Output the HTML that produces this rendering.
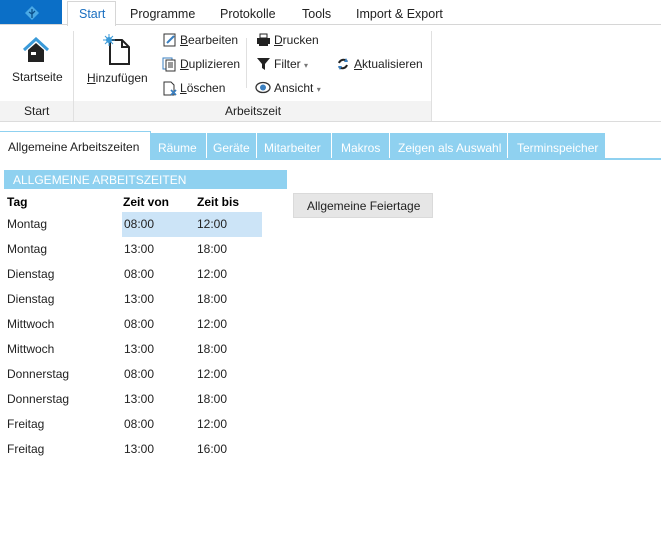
<!DOCTYPE html>
<html><head><meta charset="utf-8"><style>
*{margin:0;padding:0;box-sizing:border-box}
body{width:661px;height:558px;background:#fff;font-family:"Liberation Sans",sans-serif;font-size:12px;color:#222;position:relative;overflow:hidden}
.a{position:absolute;white-space:nowrap}
.u{text-decoration:underline}
</style></head><body>
<div class="a" style="left:0;top:0;width:62px;height:25px;background:#0b6fc7"></div>
<svg class="a" style="left:24px;top:5px" width="16" height="16" viewBox="0 0 16 16"><path d="M8 1L15 8L8 15L1 8Z" fill="#4aa9e6"/><path d="M8 4V13M5 7L8 9L11 6" stroke="#0b4f8a" stroke-width="1.3" fill="none"/></svg>
<div class="a" style="left:0;top:24px;width:661px;height:1px;background:#d6d6d6"></div>
<div class="a" style="left:67px;top:1px;width:49px;height:25px;background:#fff;border:1px solid #d6d6d6;border-bottom:none"></div>
<div class="a" style="left:79px;top:7px;color:#1a6fc0;font-size:12.5px">Start</div>
<div class="a" style="left:130px;top:7px;font-size:12.5px">Programme</div>
<div class="a" style="left:220px;top:7px;font-size:12.5px">Protokolle</div>
<div class="a" style="left:302px;top:7px;font-size:12.5px">Tools</div>
<div class="a" style="left:356px;top:7px;font-size:12.5px">Import &amp; Export</div>
<div class="a" style="left:0;top:101px;width:432px;height:20px;background:#f3f3f3"></div>
<div class="a" style="left:0;top:121px;width:661px;height:1px;background:#dcdcdc"></div>
<div class="a" style="left:73px;top:31px;width:1px;height:90px;background:#e0e0e0"></div>
<div class="a" style="left:431px;top:31px;width:1px;height:90px;background:#e0e0e0"></div>
<div class="a" style="left:246px;top:38px;width:1px;height:50px;background:#e0e0e0"></div>
<div class="a" style="left:24px;top:104px">Start</div>
<div class="a" style="left:225px;top:104px">Arbeitszeit</div>
<svg class="a" style="left:22px;top:37px" width="28" height="26" viewBox="0 0 28 26"><path d="M2 13L14 2L26 13" stroke="#3a9ad9" stroke-width="3" fill="none"/><path d="M6 13L14 6L22 13V25H6Z" fill="#222"/><rect x="9" y="15" width="5" height="3" fill="#fff"/></svg>
<div class="a" style="left:12px;top:70px">Startseite</div>
<svg class="a" style="left:102px;top:34px" width="30" height="32" viewBox="0 0 30 32"><path d="M8 6H20L27 13V30H8Z" fill="#fff" stroke="#222" stroke-width="2"/><path d="M20 6V13H27" fill="none" stroke="#222" stroke-width="2"/><circle cx="7" cy="6" r="3" fill="#3a9ad9"/><path d="M7 0V12M1 6H13M3 2L11 10M11 2L3 10" stroke="#3a9ad9" stroke-width="1"/></svg>
<div class="a" style="left:87px;top:71px"><span class="u">H</span>inzufügen</div>
<svg class="a" style="left:163px;top:33px" width="14" height="14"><rect x="1" y="1" width="11" height="12" fill="none" stroke="#333"/><path d="M4 10L11 3" stroke="#3a7fc0" stroke-width="2"/></svg>
<div class="a" style="left:180px;top:33px"><span class="u">B</span>earbeiten</div>
<svg class="a" style="left:162px;top:57px" width="15" height="15"><rect x="1" y="1" width="9" height="11" fill="#fff" stroke="#3a7fc0"/><rect x="4" y="3" width="9" height="11" fill="#fff" stroke="#333"/><path d="M6 6H11M6 8H11M6 10H11" stroke="#333"/></svg>
<div class="a" style="left:180px;top:57px"><span class="u">D</span>uplizieren</div>
<svg class="a" style="left:163px;top:81px" width="15" height="15"><path d="M1 1H8L11 4V14H1Z" fill="none" stroke="#333"/><path d="M8 9L13 14M13 9L8 14" stroke="#3a7fc0" stroke-width="1.8"/></svg>
<div class="a" style="left:180px;top:81px"><span class="u">L</span>öschen</div>
<svg class="a" style="left:256px;top:33px" width="15" height="14"><rect x="4" y="1" width="7" height="4" fill="none" stroke="#222"/><rect x="1" y="5" width="13" height="6" fill="#222"/><rect x="3" y="11" width="9" height="2" fill="#222"/></svg>
<div class="a" style="left:274px;top:33px"><span class="u">D</span>rucken</div>
<svg class="a" style="left:256px;top:57px" width="15" height="14"><path d="M1 1H14L9 7V13L6 11V7Z" fill="#222"/></svg>
<div class="a" style="left:274px;top:57px">Filter <span style="font-size:8px;color:#777">▾</span></div>
<svg class="a" style="left:255px;top:81px" width="16" height="13"><ellipse cx="8" cy="6.5" rx="7" ry="5" fill="none" stroke="#333" stroke-width="1.3"/><circle cx="8" cy="6.5" r="3" fill="#3a7fc0"/></svg>
<div class="a" style="left:274px;top:81px">Ansicht <span style="font-size:8px;color:#777">▾</span></div>
<svg class="a" style="left:336px;top:57px" width="14" height="14"><path d="M3 6A5 5 0 0 1 11 4M11 8A5 5 0 0 1 3 10" stroke="#222" stroke-width="2" fill="none"/><path d="M10 1L12 5L8 5Z M4 13L2 9L6 9Z" fill="#3a7fc0"/></svg>
<div class="a" style="left:354px;top:57px"><span class="u">A</span>ktualisieren</div>
<div class="a" style="left:0;top:158px;width:661px;height:2px;background:#8fd1f0"></div>
<div class="a" style="left:0;top:131px;width:151px;height:29px;background:#fff;border-top:1px solid #8fd1f0;border-right:1px solid #8fd1f0"></div>
<div class="a" style="left:8px;top:140px">Allgemeine Arbeitszeiten</div>
<div class="a" style="left:151px;top:133px;width:454px;height:25px;background:#8fd1f0"></div>
<div class="a" style="left:206px;top:133px;width:1px;height:25px;background:#fff"></div>
<div class="a" style="left:256px;top:133px;width:1px;height:25px;background:#fff"></div>
<div class="a" style="left:331px;top:133px;width:1px;height:25px;background:#fff"></div>
<div class="a" style="left:389px;top:133px;width:1px;height:25px;background:#fff"></div>
<div class="a" style="left:507px;top:133px;width:1px;height:25px;background:#fff"></div>
<div class="a" style="left:158px;top:141px;color:#fff">Räume</div>
<div class="a" style="left:213px;top:141px;color:#fff">Geräte</div>
<div class="a" style="left:264px;top:141px;color:#fff">Mitarbeiter</div>
<div class="a" style="left:341px;top:141px;color:#fff">Makros</div>
<div class="a" style="left:398px;top:141px;color:#fff">Zeigen als Auswahl</div>
<div class="a" style="left:517px;top:141px;color:#fff">Terminspeicher</div>
<div class="a" style="left:4px;top:170px;width:283px;height:19px;background:#8fd1f0"></div>
<div class="a" style="left:13px;top:173px;color:#fff">ALLGEMEINE ARBEITSZEITEN</div>
<div class="a" style="left:293px;top:193px;width:140px;height:25px;background:#e6e6e6;border:1px solid #dadada"></div>
<div class="a" style="left:307px;top:199px">Allgemeine Feiertage</div>
<div class="a" style="left:7px;top:195px;font-weight:bold;color:#000">Tag</div>
<div class="a" style="left:123px;top:195px;font-weight:bold;color:#000">Zeit von</div>
<div class="a" style="left:197px;top:195px;font-weight:bold;color:#000">Zeit bis</div>
<div class="a" style="left:122px;top:212px;width:140px;height:25px;background:#cce4f7"></div>
<div class="a" style="left:7px;top:212px;line-height:25px">Montag<br>Montag<br>Dienstag<br>Dienstag<br>Mittwoch<br>Mittwoch<br>Donnerstag<br>Donnerstag<br>Freitag<br>Freitag</div>
<div class="a" style="left:124px;top:212px;line-height:25px">08:00<br>13:00<br>08:00<br>13:00<br>08:00<br>13:00<br>08:00<br>13:00<br>08:00<br>13:00</div>
<div class="a" style="left:197px;top:212px;line-height:25px">12:00<br>18:00<br>12:00<br>18:00<br>12:00<br>18:00<br>12:00<br>18:00<br>12:00<br>16:00</div>
</body></html>
